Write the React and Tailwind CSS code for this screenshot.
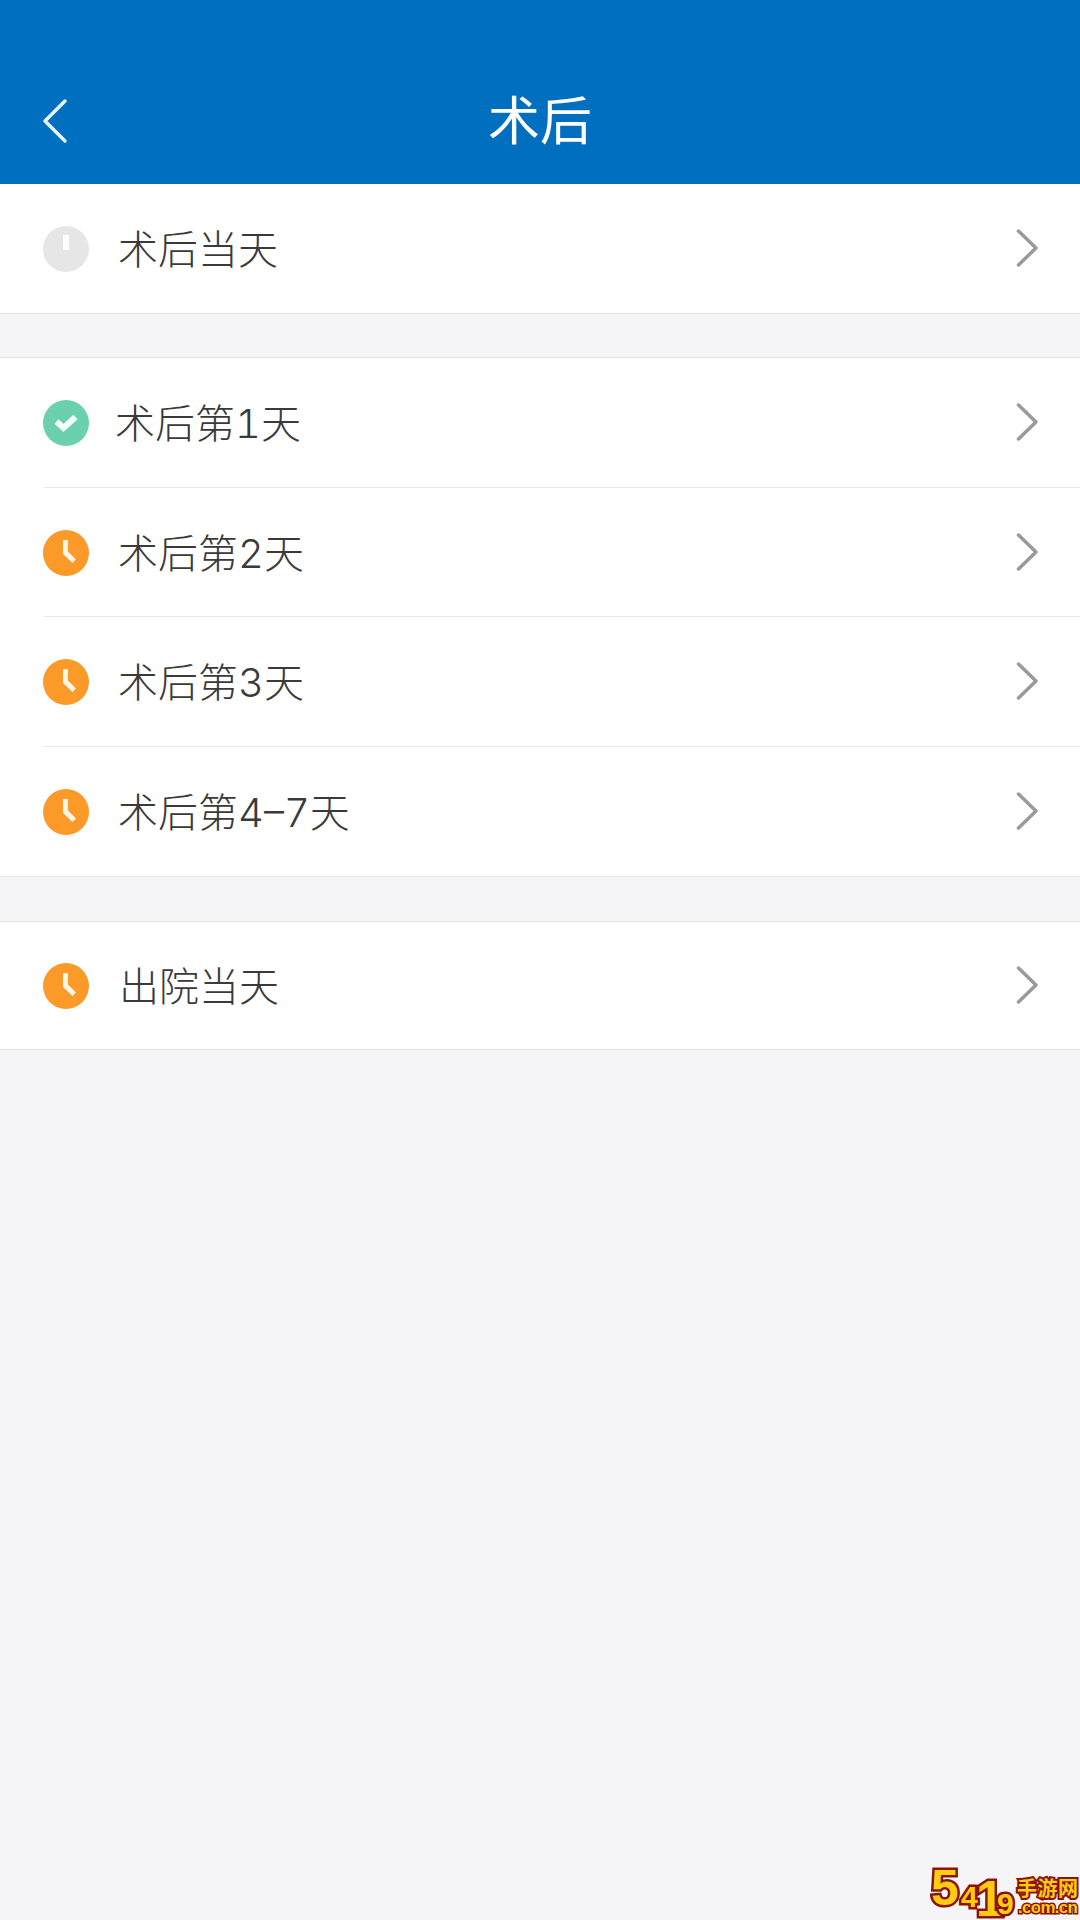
import React from 'react';

const cjk = { fontFamily: 'Inter, "Noto Sans CJK SC", "Liberation Sans", sans-serif' };

const BackArrow = () => (
  <svg width="28" height="46" viewBox="0 0 28 46" fill="none" className="absolute left-[41px] top-[98px]">
    <path d="M24 3 L4 23 L24 43" stroke="#e4f6ff" strokeWidth="3.500" strokeLinecap="round" strokeLinejoin="round" />
  </svg>
);

const Chevron = () => (
  <svg width="24" height="40" viewBox="0 0 24 40" fill="none" className="mb-[2px] shrink-0">
    <path d="M3.500 3 L21 20 L3.500 37" stroke="#9a9a9a" strokeWidth="3.500" strokeLinecap="round" strokeLinejoin="round" />
  </svg>
);

const StatusIcon = ({ type }) => {
  if (type === 'pending') {
    return (
      <svg width="46" height="46" viewBox="0 0 46 46" className="shrink-0">
        <circle cx="23" cy="23" r="23" fill="#e6e6e6" />
        <rect x="20" y="9" width="6" height="15" fill="#ffffff" />
      </svg>
    );
  }
  if (type === 'done') {
    return (
      <svg width="46" height="46" viewBox="0 0 46 46" className="shrink-0">
        <circle cx="23" cy="23" r="23" fill="#6bd0ad" />
        <path d="M13.500 21.500 L20.500 28 L32.500 17" fill="none" stroke="#f4fffa" strokeWidth="6" strokeLinejoin="miter" />
      </svg>
    );
  }
  return (
    <svg width="46" height="46" viewBox="0 0 46 46" className="shrink-0">
      <circle cx="23" cy="23" r="23" fill="#fb9a28" />
      <path d="M20 10 L25 10 L25 21.500 L33 29.500 L29.500 33 L20 24 Z" fill="#fff6e6" />
    </svg>
  );
};

const Row = ({ label, type, textLeft, height = 'h-[130px]', divider, last }) => (
  <div className={`relative flex items-center bg-white pl-[43px] pr-[41px] ${height} ${last ? 'border-b border-[#e4e3e5]' : ''}`}>
    <StatusIcon type={type} />
    <span className={`mt-[2px] flex-1 text-[40px] leading-none font-light tabular-nums text-[#3a3a3a] ${textLeft}`} style={cjk}>{label}</span>
    <Chevron />
    {divider && <div className="absolute bottom-0 left-[44px] right-0 h-px bg-[#e9e9e9]" />}
  </div>
);

const Group = ({ children }) => (
  <div className="border-t border-[#e4e3e5]">{children}</div>
);

const Watermark = () => (
  <svg width="150" height="60" viewBox="0 0 150 60" className="absolute bottom-0 right-0">
    <g fontFamily='"Liberation Sans", sans-serif' fontWeight="700" fill="#ffcc11" stroke="#8a1408" strokeWidth="5" paintOrder="stroke">
      <text x="1" y="45" fontSize="50">5</text>
      <text x="31" y="47" fontSize="30">4</text>
      <text x="46" y="56" fontSize="50">1</text>
      <text x="67" y="54" fontSize="30">9</text>
    </g>
    <text x="87" y="36" fontSize="20" fontWeight="700" fill="#ffcc11" stroke="#8a1408" strokeWidth="4" paintOrder="stroke" fontFamily='"Noto Sans CJK SC", sans-serif' textLength="61">手游网</text>
    <text x="88" y="53" fontSize="17" fontWeight="700" fill="#ffcc11" stroke="#8a1408" strokeWidth="3" paintOrder="stroke" fontFamily='"Liberation Sans", sans-serif' textLength="60">.com.cn</text>
  </svg>
);

export default function App() {
  return (
    <div className="relative flex h-[1920px] w-[1080px] flex-col overflow-hidden bg-[#f5f4f6]">
      <div className="relative flex h-[184px] shrink-0 items-end justify-center bg-[#006fbf] pb-[27px]">
        <BackArrow />
        <span className="text-[52px] leading-[70px] font-normal text-white" style={cjk}>术后</span>
      </div>

      <Row label="术后当天" type="pending" textLeft="ml-[29px]" last />

      <div className="mt-[43px]">
        <Group>
          <Row label="术后第1天" type="done" textLeft="ml-[26px]" divider />
          <Row label="术后第2天" type="clock" textLeft="ml-[29px]" height="h-[129px]" divider />
          <Row label="术后第3天" type="clock" textLeft="ml-[29px]" divider />
          <Row label="术后第4–7天" type="clock" textLeft="ml-[29px]" last />
        </Group>
      </div>

      <div className="mt-[44px]">
        <Group>
          <Row label="出院当天" type="clock" textLeft="ml-[30px]" height="h-[128px]" last />
        </Group>
      </div>

      <Watermark />
    </div>
  );
}
